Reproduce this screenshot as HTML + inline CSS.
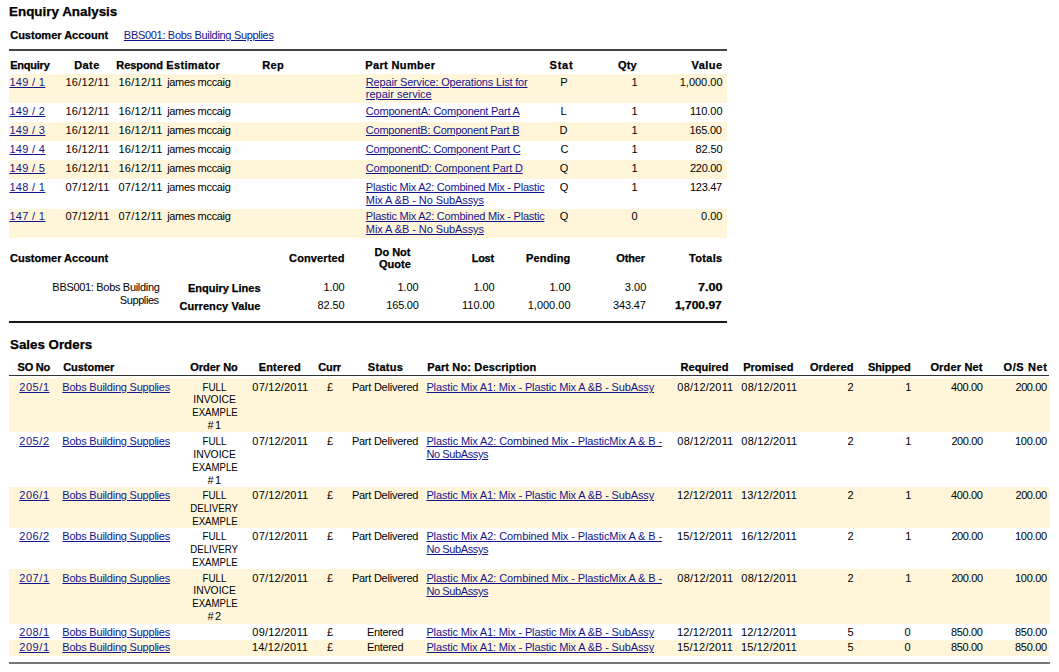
<!DOCTYPE html>
<html><head><meta charset="utf-8"><title>Enquiry Analysis</title>
<style>
html,body{margin:0;padding:0;background:#fff;width:1059px;height:672px;overflow:hidden;position:relative}
body{font-family:"Liberation Sans",sans-serif;font-size:11px;color:#000}
.t{position:absolute;white-space:pre;line-height:13px}
.b{-webkit-text-stroke:0.25px currentColor}
.a{color:#14148f;text-decoration:underline}
.r{position:absolute}
</style></head><body>
<div class="r" style="left:9px;top:49px;width:718px;height:2px;background:#444"></div>
<div class="r" style="left:9px;top:74px;width:718px;height:29px;background:#fff6da"></div>
<div class="r" style="left:9px;top:122px;width:718px;height:19px;background:#fff6da"></div>
<div class="r" style="left:9px;top:160px;width:718px;height:19px;background:#fff6da"></div>
<div class="r" style="left:9px;top:209px;width:718px;height:29px;background:#fff6da"></div>
<div class="r" style="left:9px;top:321px;width:718px;height:2px;background:#1a1a1a"></div>
<div class="r" style="left:9px;top:375px;width:1040px;height:1px;background:#333"></div>
<div class="r" style="left:9px;top:378px;width:1041px;height:54px;background:#fff6da"></div>
<div class="r" style="left:9px;top:487px;width:1041px;height:41px;background:#fff6da"></div>
<div class="r" style="left:9px;top:569px;width:1041px;height:55px;background:#fff6da"></div>
<div class="r" style="left:9px;top:640px;width:1041px;height:16px;background:#fff6da"></div>
<div class="r" style="left:9px;top:662px;width:1041px;height:2px;background:#777"></div>
<div class="t b" style="left:9.40px;top:6px;font-weight:bold;font-size:12px"><span id="i0" style="display:inline-block;transform:scaleX(1.1173);transform-origin:left">Enquiry Analysis</span></div>
<div class="t b" style="left:10.20px;top:29px;font-weight:bold"><span id="i1">Customer Account</span></div>
<div class="t a" style="left:123.86px;top:29px;letter-spacing:-0.308px"><span id="i2">BBS001: Bobs Building Supplies</span></div>
<div class="t b" style="left:10.20px;top:59px;font-weight:bold;letter-spacing:-0.225px"><span id="i3">Enquiry</span></div>
<div class="t b" style="left:-113.05px;width:400px;text-align:center;top:59px;font-weight:bold;letter-spacing:0.450px"><span id="i4">Date</span></div>
<div class="t b" style="left:-60.45px;width:400px;text-align:center;top:59px;font-weight:bold;letter-spacing:-0.075px"><span id="i5">Respond</span></div>
<div class="t b" style="left:166.30px;top:59px;font-weight:bold;letter-spacing:0.338px"><span id="i6">Estimator</span></div>
<div class="t b" style="left:262.20px;top:59px;font-weight:bold;letter-spacing:0.342px"><span id="i7">Rep</span></div>
<div class="t b" style="left:365.30px;top:59px;font-weight:bold;letter-spacing:0.360px"><span id="i8">Part Number</span></div>
<div class="t b" style="left:361.45px;width:400px;text-align:center;top:59px;font-weight:bold;letter-spacing:0.750px"><span id="i9">Stat</span></div>
<div class="t b" style="right:422.20px;top:59px;font-weight:bold;letter-spacing:0.119px"><span id="i10">Qty</span></div>
<div class="t b" style="right:336.50px;top:59px;font-weight:bold;letter-spacing:0.450px"><span id="i11">Value</span></div>
<div class="t a" style="left:9.40px;top:76px;letter-spacing:0.327px"><span id="i12">149 / 1</span></div>
<div class="t" style="left:-112.50px;width:400px;text-align:center;top:76px;letter-spacing:0.257px"><span id="i13">16/12/11</span></div>
<div class="t" style="left:-59.50px;width:400px;text-align:center;top:76px;letter-spacing:0.257px"><span id="i14">16/12/11</span></div>
<div class="t" style="left:167.20px;top:76px;letter-spacing:-0.327px"><span id="i15">james mccaig</span></div>
<div class="t a" style="left:365.86px;top:76px;letter-spacing:-0.185px"><span id="i16">Repair Service: Operations List for</span></div>
<div class="t a" style="left:365.86px;top:88px;letter-spacing:-0.014px"><span id="i17">repair service</span></div>
<div class="t" style="left:364.00px;width:400px;text-align:center;top:76px"><span id="i18">P</span></div>
<div class="t" style="right:421.40px;top:76px"><span id="i19">1</span></div>
<div class="t" style="right:336.50px;top:76px;letter-spacing:-0.006px"><span id="i20">1,000.00</span></div>
<div class="t a" style="left:9.40px;top:105px;letter-spacing:0.327px"><span id="i21">149 / 2</span></div>
<div class="t" style="left:-112.50px;width:400px;text-align:center;top:105px;letter-spacing:0.257px"><span id="i22">16/12/11</span></div>
<div class="t" style="left:-59.50px;width:400px;text-align:center;top:105px;letter-spacing:0.257px"><span id="i23">16/12/11</span></div>
<div class="t" style="left:167.20px;top:105px;letter-spacing:-0.327px"><span id="i24">james mccaig</span></div>
<div class="t a" style="left:365.86px;top:105px;letter-spacing:-0.233px"><span id="i25">ComponentA: Component Part A</span></div>
<div class="t" style="left:363.60px;width:400px;text-align:center;top:105px"><span id="i26">L</span></div>
<div class="t" style="right:421.40px;top:105px"><span id="i27">1</span></div>
<div class="t" style="right:336.50px;top:105px;letter-spacing:-0.054px"><span id="i28">110.00</span></div>
<div class="t a" style="left:9.40px;top:124px;letter-spacing:0.327px"><span id="i29">149 / 3</span></div>
<div class="t" style="left:-112.50px;width:400px;text-align:center;top:124px;letter-spacing:0.257px"><span id="i30">16/12/11</span></div>
<div class="t" style="left:-59.50px;width:400px;text-align:center;top:124px;letter-spacing:0.257px"><span id="i31">16/12/11</span></div>
<div class="t" style="left:167.20px;top:124px;letter-spacing:-0.327px"><span id="i32">james mccaig</span></div>
<div class="t a" style="left:365.86px;top:124px;letter-spacing:-0.266px"><span id="i33">ComponentB: Component Part B</span></div>
<div class="t" style="left:363.60px;width:400px;text-align:center;top:124px"><span id="i34">D</span></div>
<div class="t" style="right:421.40px;top:124px"><span id="i35">1</span></div>
<div class="t" style="right:337.30px;top:124px;letter-spacing:-0.225px"><span id="i36">165.00</span></div>
<div class="t a" style="left:9.40px;top:143px;letter-spacing:0.327px"><span id="i37">149 / 4</span></div>
<div class="t" style="left:-112.50px;width:400px;text-align:center;top:143px;letter-spacing:0.257px"><span id="i38">16/12/11</span></div>
<div class="t" style="left:-59.50px;width:400px;text-align:center;top:143px;letter-spacing:0.257px"><span id="i39">16/12/11</span></div>
<div class="t" style="left:167.20px;top:143px;letter-spacing:-0.327px"><span id="i40">james mccaig</span></div>
<div class="t a" style="left:365.86px;top:143px;letter-spacing:-0.269px"><span id="i41">ComponentC: Component Part C</span></div>
<div class="t" style="left:364.40px;width:400px;text-align:center;top:143px"><span id="i42">C</span></div>
<div class="t" style="right:421.40px;top:143px"><span id="i43">1</span></div>
<div class="t" style="right:336.50px;top:143px;letter-spacing:-0.118px"><span id="i44">82.50</span></div>
<div class="t a" style="left:9.40px;top:162px;letter-spacing:0.327px"><span id="i45">149 / 5</span></div>
<div class="t" style="left:-112.50px;width:400px;text-align:center;top:162px;letter-spacing:0.257px"><span id="i46">16/12/11</span></div>
<div class="t" style="left:-59.50px;width:400px;text-align:center;top:162px;letter-spacing:0.257px"><span id="i47">16/12/11</span></div>
<div class="t" style="left:167.20px;top:162px;letter-spacing:-0.327px"><span id="i48">james mccaig</span></div>
<div class="t a" style="left:365.86px;top:162px;letter-spacing:-0.187px"><span id="i49">ComponentD: Component Part D</span></div>
<div class="t" style="left:364.00px;width:400px;text-align:center;top:162px"><span id="i50">Q</span></div>
<div class="t" style="right:421.40px;top:162px"><span id="i51">1</span></div>
<div class="t" style="right:337.30px;top:162px;letter-spacing:-0.336px"><span id="i52">220.00</span></div>
<div class="t a" style="left:9.40px;top:181px;letter-spacing:0.327px"><span id="i53">148 / 1</span></div>
<div class="t" style="left:-112.50px;width:400px;text-align:center;top:181px;letter-spacing:0.257px"><span id="i54">07/12/11</span></div>
<div class="t" style="left:-59.50px;width:400px;text-align:center;top:181px;letter-spacing:0.257px"><span id="i55">07/12/11</span></div>
<div class="t" style="left:167.20px;top:181px;letter-spacing:-0.327px"><span id="i56">james mccaig</span></div>
<div class="t a" style="left:365.86px;top:181px;letter-spacing:-0.224px"><span id="i57">Plastic Mix A2: Combined Mix - Plastic</span></div>
<div class="t a" style="left:365.86px;top:194px;letter-spacing:-0.080px"><span id="i58">Mix A &amp;B - No SubAssys</span></div>
<div class="t" style="left:364.00px;width:400px;text-align:center;top:181px"><span id="i59">Q</span></div>
<div class="t" style="right:421.40px;top:181px"><span id="i60">1</span></div>
<div class="t" style="right:337.30px;top:181px;letter-spacing:-0.336px"><span id="i61">123.47</span></div>
<div class="t a" style="left:9.40px;top:210px;letter-spacing:0.327px"><span id="i62">147 / 1</span></div>
<div class="t" style="left:-112.50px;width:400px;text-align:center;top:210px;letter-spacing:0.257px"><span id="i63">07/12/11</span></div>
<div class="t" style="left:-59.50px;width:400px;text-align:center;top:210px;letter-spacing:0.257px"><span id="i64">07/12/11</span></div>
<div class="t" style="left:167.20px;top:210px;letter-spacing:-0.327px"><span id="i65">james mccaig</span></div>
<div class="t a" style="left:365.86px;top:210px;letter-spacing:-0.224px"><span id="i66">Plastic Mix A2: Combined Mix - Plastic</span></div>
<div class="t a" style="left:365.86px;top:223px;letter-spacing:-0.080px"><span id="i67">Mix A &amp;B - No SubAssys</span></div>
<div class="t" style="left:364.00px;width:400px;text-align:center;top:210px"><span id="i68">Q</span></div>
<div class="t" style="right:421.40px;top:210px"><span id="i69">0</span></div>
<div class="t" style="right:336.50px;top:210px"><span id="i70">0.00</span></div>
<div class="t b" style="left:10.10px;top:252px;font-weight:bold"><span id="i71">Customer Account</span></div>
<div class="t b" style="right:714.50px;top:252px;font-weight:bold;letter-spacing:0.113px"><span id="i72">Converted</span></div>
<div class="t b" style="left:192.44px;width:400px;text-align:center;top:246px;font-weight:bold;letter-spacing:-0.045px"><span id="i73">Do Not</span></div>
<div class="t b" style="left:194.95px;width:400px;text-align:center;top:258px;font-weight:bold"><span id="i74">Quote</span></div>
<div class="t b" style="right:565.20px;top:252px;font-weight:bold;letter-spacing:-0.300px"><span id="i75">Lost</span></div>
<div class="t b" style="right:488.50px;top:252px;font-weight:bold;letter-spacing:0.150px"><span id="i76">Pending</span></div>
<div class="t b" style="right:414.15px;top:252px;font-weight:bold;letter-spacing:-0.163px"><span id="i77">Other</span></div>
<div class="t b" style="right:336.50px;top:252px;font-weight:bold;letter-spacing:0.315px"><span id="i78">Totals</span></div>
<div class="t" style="right:899.50px;top:281px;letter-spacing:-0.315px"><span id="i79">BBS001: Bobs Building</span></div>
<div class="t" style="right:900.30px;top:294px;letter-spacing:-0.418px"><span id="i80">Supplies</span></div>
<div class="t b" style="right:798.50px;top:282px;font-weight:bold;letter-spacing:-0.019px"><span id="i81">Enquiry Lines</span></div>
<div class="t b" style="right:798.50px;top:300px;font-weight:bold;letter-spacing:0.070px"><span id="i82">Currency Value</span></div>
<div class="t" style="right:714.50px;top:281px;letter-spacing:-0.075px"><span id="i83">1.00</span></div>
<div class="t" style="right:714.50px;top:299px;letter-spacing:-0.118px"><span id="i84">82.50</span></div>
<div class="t" style="right:640.35px;top:281px;letter-spacing:-0.075px"><span id="i85">1.00</span></div>
<div class="t" style="right:640.35px;top:299px;letter-spacing:-0.225px"><span id="i86">165.00</span></div>
<div class="t" style="right:564.40px;top:281px;letter-spacing:-0.075px"><span id="i87">1.00</span></div>
<div class="t" style="right:564.40px;top:299px;letter-spacing:-0.054px"><span id="i88">110.00</span></div>
<div class="t" style="right:488.50px;top:281px;letter-spacing:-0.075px"><span id="i89">1.00</span></div>
<div class="t" style="right:488.50px;top:299px;letter-spacing:-0.006px"><span id="i90">1,000.00</span></div>
<div class="t" style="right:412.55px;top:281px;letter-spacing:0.075px"><span id="i91">3.00</span></div>
<div class="t" style="right:413.35px;top:299px;letter-spacing:-0.180px"><span id="i92">343.47</span></div>
<div class="t b" style="right:336.50px;top:281px;font-weight:bold"><span id="i93" style="display:inline-block;transform:scaleX(1.1429);transform-origin:right">7.00</span></div>
<div class="t b" style="right:337.30px;top:299px;font-weight:bold"><span id="i94" style="display:inline-block;transform:scaleX(1.0957);transform-origin:right">1,700.97</span></div>
<div class="t b" style="left:10.10px;top:339px;font-weight:bold;font-size:12px"><span id="i95" style="display:inline-block;transform:scaleX(1.1107);transform-origin:left">Sales Orders</span></div>
<div class="t b" style="left:17.60px;top:361px;font-weight:bold;letter-spacing:-0.225px"><span id="i96">SO No</span></div>
<div class="t b" style="left:63.15px;top:361px;font-weight:bold;letter-spacing:-0.030px"><span id="i97">Customer</span></div>
<div class="t b" style="left:14.00px;width:400px;text-align:center;top:361px;font-weight:bold"><span id="i98">Order No</span></div>
<div class="t b" style="left:79.84px;width:400px;text-align:center;top:361px;font-weight:bold;letter-spacing:0.195px"><span id="i99">Entered</span></div>
<div class="t b" style="left:129.60px;width:400px;text-align:center;top:361px;font-weight:bold;letter-spacing:-0.150px"><span id="i100">Curr</span></div>
<div class="t b" style="left:185.56px;width:400px;text-align:center;top:361px;font-weight:bold;letter-spacing:0.315px"><span id="i101">Status</span></div>
<div class="t b" style="left:427.20px;top:361px;font-weight:bold;letter-spacing:0.142px"><span id="i102">Part No: Description</span></div>
<div class="t b" style="left:504.56px;width:400px;text-align:center;top:361px;font-weight:bold;letter-spacing:0.028px"><span id="i103">Required</span></div>
<div class="t b" style="left:568.34px;width:400px;text-align:center;top:361px;font-weight:bold;letter-spacing:0.032px"><span id="i104">Promised</span></div>
<div class="t b" style="right:205.45px;top:361px;font-weight:bold;letter-spacing:0.119px"><span id="i105">Ordered</span></div>
<div class="t b" style="right:148.35px;top:361px;font-weight:bold;letter-spacing:-0.109px"><span id="i106">Shipped</span></div>
<div class="t b" style="right:76.35px;top:361px;font-weight:bold;letter-spacing:0.171px"><span id="i107">Order Net</span></div>
<div class="t b" style="right:11.50px;top:361px;font-weight:bold;letter-spacing:0.600px"><span id="i108">O/S Net</span></div>
<div class="t a" style="left:19.30px;top:381px;letter-spacing:0.544px"><span id="i109">205/1</span></div>
<div class="t a" style="left:62.35px;top:381px;letter-spacing:-0.220px"><span id="i110">Bobs Building Supplies</span></div>
<div class="t" style="left:14.10px;width:400px;text-align:center;top:381px"><span id="i111" style="display:inline-block;transform:scaleX(0.8939);transform-origin:center">FULL</span></div>
<div class="t" style="left:14.50px;width:400px;text-align:center;top:393px"><span id="i112" style="display:inline-block;transform:scaleX(0.9416);transform-origin:center">INVOICE</span></div>
<div class="t" style="left:14.50px;width:400px;text-align:center;top:406px"><span id="i113" style="display:inline-block;transform:scaleX(0.8726);transform-origin:center">EXAMPLE</span></div>
<div class="t" style="left:14.90px;width:400px;text-align:center;top:419px;letter-spacing:1.350px"><span id="i114">#1</span></div>
<div class="t" style="left:80.40px;width:400px;text-align:center;top:381px;letter-spacing:0.181px"><span id="i115">07/12/2011</span></div>
<div class="t" style="left:130.00px;width:400px;text-align:center;top:381px"><span id="i116">£</span></div>
<div class="t" style="left:185.05px;width:400px;text-align:center;top:381px;letter-spacing:-0.242px"><span id="i117">Part Delivered</span></div>
<div class="t a" style="left:426.40px;top:381px;letter-spacing:-0.134px"><span id="i118">Plastic Mix A1: Mix - Plastic Mix A &amp;B - SubAssy</span></div>
<div class="t" style="left:505.40px;width:400px;text-align:center;top:381px;letter-spacing:0.181px"><span id="i119">08/12/2011</span></div>
<div class="t" style="left:569.40px;width:400px;text-align:center;top:381px;letter-spacing:0.181px"><span id="i120">08/12/2011</span></div>
<div class="t" style="right:205.45px;top:381px"><span id="i121">2</span></div>
<div class="t" style="right:147.55px;top:381px"><span id="i122">1</span></div>
<div class="t" style="right:76.35px;top:381px;letter-spacing:-0.336px"><span id="i123">400.00</span></div>
<div class="t" style="right:12.30px;top:381px;letter-spacing:-0.396px"><span id="i124">200.00</span></div>
<div class="t a" style="left:19.30px;top:435px;letter-spacing:0.544px"><span id="i125">205/2</span></div>
<div class="t a" style="left:62.35px;top:435px;letter-spacing:-0.220px"><span id="i126">Bobs Building Supplies</span></div>
<div class="t" style="left:14.10px;width:400px;text-align:center;top:435px"><span id="i127" style="display:inline-block;transform:scaleX(0.8939);transform-origin:center">FULL</span></div>
<div class="t" style="left:14.50px;width:400px;text-align:center;top:448px"><span id="i128" style="display:inline-block;transform:scaleX(0.9416);transform-origin:center">INVOICE</span></div>
<div class="t" style="left:14.50px;width:400px;text-align:center;top:461px"><span id="i129" style="display:inline-block;transform:scaleX(0.8726);transform-origin:center">EXAMPLE</span></div>
<div class="t" style="left:14.90px;width:400px;text-align:center;top:474px;letter-spacing:1.350px"><span id="i130">#1</span></div>
<div class="t" style="left:80.40px;width:400px;text-align:center;top:435px;letter-spacing:0.181px"><span id="i131">07/12/2011</span></div>
<div class="t" style="left:130.00px;width:400px;text-align:center;top:435px"><span id="i132">£</span></div>
<div class="t" style="left:185.05px;width:400px;text-align:center;top:435px;letter-spacing:-0.242px"><span id="i133">Part Delivered</span></div>
<div class="t a" style="left:426.40px;top:435px;letter-spacing:-0.108px"><span id="i134">Plastic Mix A2: Combined Mix - PlasticMix A &amp; B -</span></div>
<div class="t a" style="left:426.40px;top:448px;letter-spacing:-0.384px"><span id="i135">No SubAssys</span></div>
<div class="t" style="left:505.40px;width:400px;text-align:center;top:435px;letter-spacing:0.181px"><span id="i136">08/12/2011</span></div>
<div class="t" style="left:569.40px;width:400px;text-align:center;top:435px;letter-spacing:0.181px"><span id="i137">08/12/2011</span></div>
<div class="t" style="right:205.45px;top:435px"><span id="i138">2</span></div>
<div class="t" style="right:147.55px;top:435px"><span id="i139">1</span></div>
<div class="t" style="right:76.35px;top:435px;letter-spacing:-0.396px"><span id="i140">200.00</span></div>
<div class="t" style="right:12.30px;top:435px;letter-spacing:-0.336px"><span id="i141">100.00</span></div>
<div class="t a" style="left:19.30px;top:489px;letter-spacing:0.544px"><span id="i142">206/1</span></div>
<div class="t a" style="left:62.35px;top:489px;letter-spacing:-0.220px"><span id="i143">Bobs Building Supplies</span></div>
<div class="t" style="left:14.10px;width:400px;text-align:center;top:489px"><span id="i144" style="display:inline-block;transform:scaleX(0.8939);transform-origin:center">FULL</span></div>
<div class="t" style="left:14.50px;width:400px;text-align:center;top:502px"><span id="i145" style="display:inline-block;transform:scaleX(0.8787);transform-origin:center">DELIVERY</span></div>
<div class="t" style="left:14.50px;width:400px;text-align:center;top:515px"><span id="i146" style="display:inline-block;transform:scaleX(0.8726);transform-origin:center">EXAMPLE</span></div>
<div class="t" style="left:80.40px;width:400px;text-align:center;top:489px;letter-spacing:0.181px"><span id="i147">07/12/2011</span></div>
<div class="t" style="left:130.00px;width:400px;text-align:center;top:489px"><span id="i148">£</span></div>
<div class="t" style="left:185.05px;width:400px;text-align:center;top:489px;letter-spacing:-0.242px"><span id="i149">Part Delivered</span></div>
<div class="t a" style="left:426.40px;top:489px;letter-spacing:-0.134px"><span id="i150">Plastic Mix A1: Mix - Plastic Mix A &amp;B - SubAssy</span></div>
<div class="t" style="left:505.00px;width:400px;text-align:center;top:489px;letter-spacing:0.181px"><span id="i151">12/12/2011</span></div>
<div class="t" style="left:569.00px;width:400px;text-align:center;top:489px;letter-spacing:0.181px"><span id="i152">13/12/2011</span></div>
<div class="t" style="right:205.45px;top:489px"><span id="i153">2</span></div>
<div class="t" style="right:147.55px;top:489px"><span id="i154">1</span></div>
<div class="t" style="right:76.35px;top:489px;letter-spacing:-0.336px"><span id="i155">400.00</span></div>
<div class="t" style="right:12.30px;top:489px;letter-spacing:-0.396px"><span id="i156">200.00</span></div>
<div class="t a" style="left:19.30px;top:530px;letter-spacing:0.544px"><span id="i157">206/2</span></div>
<div class="t a" style="left:62.35px;top:530px;letter-spacing:-0.220px"><span id="i158">Bobs Building Supplies</span></div>
<div class="t" style="left:14.10px;width:400px;text-align:center;top:530px"><span id="i159" style="display:inline-block;transform:scaleX(0.8939);transform-origin:center">FULL</span></div>
<div class="t" style="left:14.50px;width:400px;text-align:center;top:543px"><span id="i160" style="display:inline-block;transform:scaleX(0.8787);transform-origin:center">DELIVERY</span></div>
<div class="t" style="left:14.50px;width:400px;text-align:center;top:556px"><span id="i161" style="display:inline-block;transform:scaleX(0.8726);transform-origin:center">EXAMPLE</span></div>
<div class="t" style="left:80.40px;width:400px;text-align:center;top:530px;letter-spacing:0.181px"><span id="i162">07/12/2011</span></div>
<div class="t" style="left:130.00px;width:400px;text-align:center;top:530px"><span id="i163">£</span></div>
<div class="t" style="left:185.05px;width:400px;text-align:center;top:530px;letter-spacing:-0.242px"><span id="i164">Part Delivered</span></div>
<div class="t a" style="left:426.40px;top:530px;letter-spacing:-0.108px"><span id="i165">Plastic Mix A2: Combined Mix - PlasticMix A &amp; B -</span></div>
<div class="t a" style="left:426.40px;top:543px;letter-spacing:-0.384px"><span id="i166">No SubAssys</span></div>
<div class="t" style="left:505.00px;width:400px;text-align:center;top:530px;letter-spacing:0.181px"><span id="i167">15/12/2011</span></div>
<div class="t" style="left:569.00px;width:400px;text-align:center;top:530px;letter-spacing:0.181px"><span id="i168">16/12/2011</span></div>
<div class="t" style="right:205.45px;top:530px"><span id="i169">2</span></div>
<div class="t" style="right:147.55px;top:530px"><span id="i170">1</span></div>
<div class="t" style="right:76.35px;top:530px;letter-spacing:-0.396px"><span id="i171">200.00</span></div>
<div class="t" style="right:12.30px;top:530px;letter-spacing:-0.336px"><span id="i172">100.00</span></div>
<div class="t a" style="left:19.30px;top:572px;letter-spacing:0.544px"><span id="i173">207/1</span></div>
<div class="t a" style="left:62.35px;top:572px;letter-spacing:-0.220px"><span id="i174">Bobs Building Supplies</span></div>
<div class="t" style="left:14.10px;width:400px;text-align:center;top:572px"><span id="i175" style="display:inline-block;transform:scaleX(0.8939);transform-origin:center">FULL</span></div>
<div class="t" style="left:14.50px;width:400px;text-align:center;top:584px"><span id="i176" style="display:inline-block;transform:scaleX(0.9416);transform-origin:center">INVOICE</span></div>
<div class="t" style="left:14.50px;width:400px;text-align:center;top:597px"><span id="i177" style="display:inline-block;transform:scaleX(0.8726);transform-origin:center">EXAMPLE</span></div>
<div class="t" style="left:14.90px;width:400px;text-align:center;top:610px;letter-spacing:1.350px"><span id="i178">#2</span></div>
<div class="t" style="left:80.40px;width:400px;text-align:center;top:572px;letter-spacing:0.181px"><span id="i179">07/12/2011</span></div>
<div class="t" style="left:130.00px;width:400px;text-align:center;top:572px"><span id="i180">£</span></div>
<div class="t" style="left:185.05px;width:400px;text-align:center;top:572px;letter-spacing:-0.242px"><span id="i181">Part Delivered</span></div>
<div class="t a" style="left:426.40px;top:572px;letter-spacing:-0.108px"><span id="i182">Plastic Mix A2: Combined Mix - PlasticMix A &amp; B -</span></div>
<div class="t a" style="left:426.40px;top:585px;letter-spacing:-0.384px"><span id="i183">No SubAssys</span></div>
<div class="t" style="left:505.40px;width:400px;text-align:center;top:572px;letter-spacing:0.181px"><span id="i184">08/12/2011</span></div>
<div class="t" style="left:569.40px;width:400px;text-align:center;top:572px;letter-spacing:0.181px"><span id="i185">08/12/2011</span></div>
<div class="t" style="right:205.45px;top:572px"><span id="i186">2</span></div>
<div class="t" style="right:147.55px;top:572px"><span id="i187">1</span></div>
<div class="t" style="right:76.35px;top:572px;letter-spacing:-0.396px"><span id="i188">200.00</span></div>
<div class="t" style="right:12.30px;top:572px;letter-spacing:-0.336px"><span id="i189">100.00</span></div>
<div class="t a" style="left:19.30px;top:626px;letter-spacing:0.544px"><span id="i190">208/1</span></div>
<div class="t a" style="left:62.35px;top:626px;letter-spacing:-0.220px"><span id="i191">Bobs Building Supplies</span></div>
<div class="t" style="left:80.40px;width:400px;text-align:center;top:626px;letter-spacing:0.181px"><span id="i192">09/12/2011</span></div>
<div class="t" style="left:130.00px;width:400px;text-align:center;top:626px"><span id="i193">£</span></div>
<div class="t" style="left:185.05px;width:400px;text-align:center;top:626px;letter-spacing:-0.315px"><span id="i194">Entered</span></div>
<div class="t a" style="left:426.40px;top:626px;letter-spacing:-0.134px"><span id="i195">Plastic Mix A1: Mix - Plastic Mix A &amp;B - SubAssy</span></div>
<div class="t" style="left:505.00px;width:400px;text-align:center;top:626px;letter-spacing:0.181px"><span id="i196">12/12/2011</span></div>
<div class="t" style="left:569.00px;width:400px;text-align:center;top:626px;letter-spacing:0.181px"><span id="i197">12/12/2011</span></div>
<div class="t" style="right:205.45px;top:626px"><span id="i198">5</span></div>
<div class="t" style="right:148.35px;top:626px"><span id="i199">0</span></div>
<div class="t" style="right:76.35px;top:626px;letter-spacing:-0.336px"><span id="i200">850.00</span></div>
<div class="t" style="right:12.30px;top:626px;letter-spacing:-0.336px"><span id="i201">850.00</span></div>
<div class="t a" style="left:19.30px;top:641px;letter-spacing:0.544px"><span id="i202">209/1</span></div>
<div class="t a" style="left:62.35px;top:641px;letter-spacing:-0.220px"><span id="i203">Bobs Building Supplies</span></div>
<div class="t" style="left:80.00px;width:400px;text-align:center;top:641px;letter-spacing:0.181px"><span id="i204">14/12/2011</span></div>
<div class="t" style="left:130.00px;width:400px;text-align:center;top:641px"><span id="i205">£</span></div>
<div class="t" style="left:185.05px;width:400px;text-align:center;top:641px;letter-spacing:-0.315px"><span id="i206">Entered</span></div>
<div class="t a" style="left:426.40px;top:641px;letter-spacing:-0.134px"><span id="i207">Plastic Mix A1: Mix - Plastic Mix A &amp;B - SubAssy</span></div>
<div class="t" style="left:505.00px;width:400px;text-align:center;top:641px;letter-spacing:0.181px"><span id="i208">15/12/2011</span></div>
<div class="t" style="left:569.00px;width:400px;text-align:center;top:641px;letter-spacing:0.181px"><span id="i209">15/12/2011</span></div>
<div class="t" style="right:205.45px;top:641px"><span id="i210">5</span></div>
<div class="t" style="right:148.35px;top:641px"><span id="i211">0</span></div>
<div class="t" style="right:76.35px;top:641px;letter-spacing:-0.336px"><span id="i212">850.00</span></div>
<div class="t" style="right:12.30px;top:641px;letter-spacing:-0.336px"><span id="i213">850.00</span></div>
</body></html>
